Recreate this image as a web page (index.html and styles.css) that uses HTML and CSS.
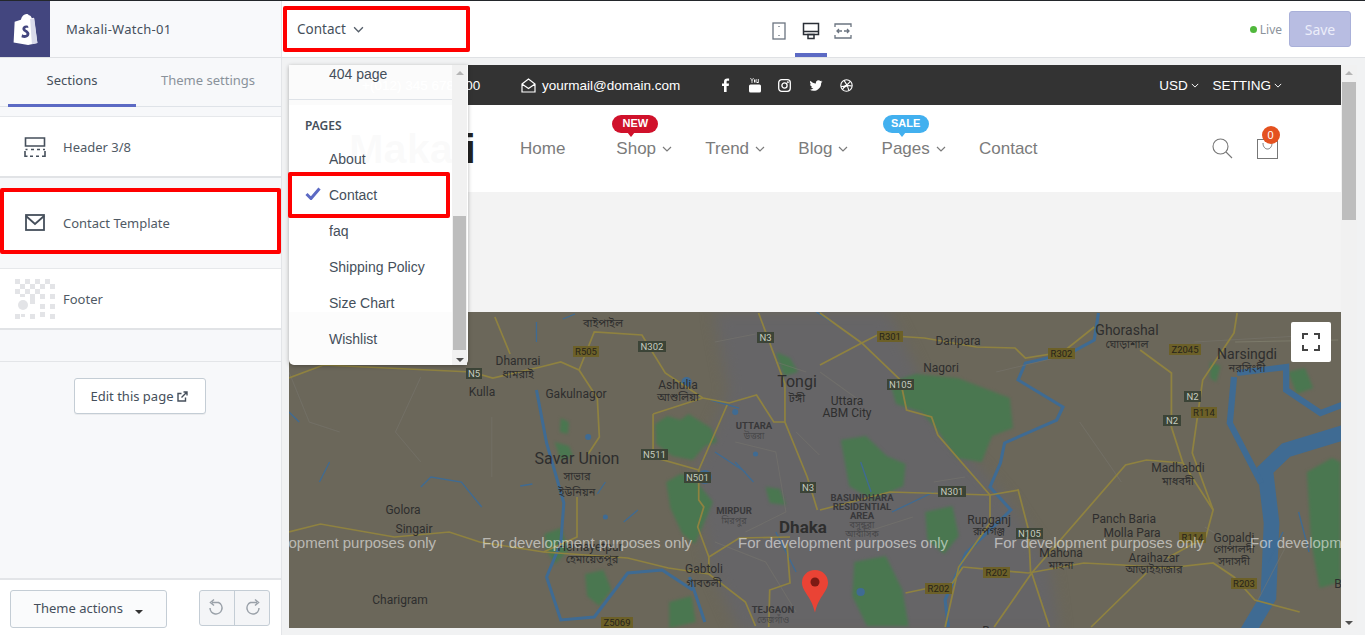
FILE: index.html
```html
<!DOCTYPE html>
<html lang="en">
<head>
    <meta charset="UTF-8">
    <meta name="viewport" content="width=device-width, initial-scale=1.0">
    <title>Makali-Watch-01 - Theme editor</title>
    <link rel="stylesheet" href="styles.css">
</head>
<body>

    <svg class="defs" width="0" height="0">
        <symbol id="chev" viewBox="0 0 10 6"><path d="M1 1l4 4 4-4" fill="none" stroke="currentColor" stroke-width="1.2"/></symbol>
    </svg>

    <!-- Top bar -->
    <header class="topbar">
        <div class="brand">
            <div class="brand-logo">
                <svg width="27" height="31" viewBox="2 1 23 30">
                    <path d="M3 8.500l6-2C10 3 12 1 14.500 1c1 0 1.800.4 2.300 1.200 1.600.1 2.400 1.500 2.800 3l2-.5L25 29l-9 2-14-2.500z" fill="#fff"/>
                    <path d="M18 5.800l1.700 24.400L25 29 22 5z" fill="#d9daea"/>
                    <path d="M16 12.500c-3-1-5.500.3-5.500 2.800 0 3 4 3.300 4 5 0 1.400-2.300 1.500-4.200.2l-.8 2.900c3.200 1.500 7.800.8 7.800-3.200 0-3.300-4-3.600-4-5 0-1 1.500-1.300 3-.6z" fill="#43467f"/>
                </svg>
            </div>
            <span class="brand-name">Makali-Watch-01</span>
        </div>
        <div class="page-select">
            <span>Contact</span>
            <svg class="page-chev"><use href="#chev"/></svg>
        </div>
        <div class="devices">
            <div class="device">
                <svg width="16" height="18" viewBox="0 0 16 18" fill="none" stroke="#6b7480" stroke-width="1.300"><rect x="2" y="1" width="12" height="16"/><path d="M8 4v1M8 13v1"/></svg>
            </div>
            <div class="device device-active">
                <svg width="18" height="18" viewBox="0 0 18 18" fill="none" stroke="#2a2f36" stroke-width="1.500"><rect x="1.500" y="1.500" width="15" height="11"/><path d="M1.500 9.500h15M6 16.500h6v-4H6z"/></svg>
            </div>
            <div class="device">
                <svg width="18" height="18" viewBox="0 0 18 18" fill="none" stroke="#6b7480" stroke-width="1.300"><path d="M1 5V2h16v3M1 13v3h16v-3M3 9h5M10 9h5M5 7L3 9l2 2M13 7l2 2-2 2"/></svg>
            </div>
        </div>
        <div class="live"><i class="live-dot"></i>Live</div>
        <button class="save-btn">Save</button>
    </header>

    <div class="workspace">

        <!-- Left sidebar -->
        <aside class="sidebar">
            <div class="tabs">
                <div class="tab tab-active">Sections</div>
                <div class="tab tab-wide">Theme settings</div>
            </div>

            <div class="card card-first">
                <svg class="card-icon" width="24" height="22" viewBox="0 0 24 22" fill="none" stroke="#454f5b" stroke-width="1.600"><path d="M2.500 2h19v8h-19z"/><path d="M2 15v5.200h2.500M7 20.200h3M13 20.200h3M19 20.200h3V15M2.500 13.500h2M8 13.500h3M14 13.500h3M20 13.500h2" /></svg>
                <span>Header 3/8</span>
            </div>
            <div class="card card-marked">
                <svg class="card-icon" width="24" height="22" viewBox="0 0 24 22" fill="none" stroke="#454f5b" stroke-width="1.800"><rect x="3" y="3" width="18" height="15"/><path d="M3 4l9 8 9-8"/></svg>
                <span>Contact Template</span>
            </div>
            <div class="card card-footer">
                <svg class="card-thumb" width="40" height="40" viewBox="0 0 40 40" fill="#e3e4e7">
                    <path d="M0 0h5v5H0zM10 0h5v5h-5zM20 0h5v5h-5zM30 0h5v5h-5zM5 5h5v5H5zM15 5h5v5h-5zM25 5h5v5h-5zM35 5h5v5h-5zM0 10h5v5H0zM10 10h5v5h-5zM20 10h5v5h-5zM35 15h5v5h-5zM25 15h5v5h-5zM15 15h5v5h-5zM5 15h5v3H5zM25 25h5v5h-5zM35 25h5v5h-5zM15 20h5v5h-5zM25 33h5v5h-5zM35 35h5v5h-5zM0 35h5v5H0zM15 35h5v5h-5z"/>
                    <circle cx="8" cy="26" r="5"/>
                    <path d="M6 35h4v3H6z"/>
                </svg>
                <span>Footer</span>
            </div>

            <div class="edit-row">
                <button class="edit-btn">
                    Edit this page
                    <svg width="11" height="11" viewBox="0 0 11 11" fill="none" stroke="#454f5b" stroke-width="1.400"><path d="M8.500 6.500v3.500H1V2.500h3.500M4.500 6.500L10 1M6.500 1H10v3.500"/></svg>
                </button>
            </div>

            <div class="side-foot">
                <button class="actions-btn">Theme actions <i class="caret"></i></button>
                <div class="history">
                    <div class="history-btn">
                        <svg width="20" height="20" viewBox="0 0 20 20" fill="none" stroke="#9aa1a9" stroke-width="1.500"><path d="M5 4.500h6.500a6 6 0 1 1-8.500 5.500M7 1.500L3.500 4.500 7 7.500"/></svg>
                    </div>
                    <div class="history-btn">
                        <svg width="20" height="20" viewBox="0 0 20 20" fill="none" stroke="#9aa1a9" stroke-width="1.500"><path d="M15 4.500H8.500a6 6 0 1 0 8.500 5.500M13 1.500l3.500 3-3.500 3"/></svg>
                    </div>
                </div>
            </div>
        </aside>

        <!-- Store preview -->
        <main class="preview">
            <div class="frame">
                <div class="store">
                    <div class="store-top">
                        <span class="phone">+(012) 345 6789 00</span>
                        <span class="mail">
                            <svg width="15" height="15" viewBox="0 0 15 15" fill="none" stroke="#fff" stroke-width="1.200"><path d="M1 6l6.500-5L14 6v8H1zM1 6l6.500 4.500L14 6"/></svg>
                            yourmail@domain.com
                        </span>
                        <div class="socials">
                            <svg width="10" height="14" viewBox="0 0 10 14" fill="#fff"><path d="M3 14V8H1V5.500h2V3.800C3 1.500 4.300.5 6.200.5c.9 0 1.600.1 1.900.1v2.200H6.800c-1 0-1.200.5-1.200 1.200v1.500h2.400L7.700 8H5.600v6z"/></svg>
                            <svg width="12" height="15" viewBox="0 0 12 15" fill="#fff"><path d="M2 0l1 2.500L4 0h.8L3.400 3v2h-.8V3L1.200 0zM5 1.500h1.500v3H5zM7.500 1h.7v3h.8V1h.7v4H7.500z"/><rect y="6.500" width="12" height="8" rx="1.500"/></svg>
                            <svg width="13" height="13" viewBox="0 0 13 13" fill="none" stroke="#fff" stroke-width="1.300"><rect x=".7" y=".7" width="11.600" height="11.600" rx="3"/><circle cx="6.500" cy="6.500" r="2.600"/><circle cx="9.800" cy="3.200" r=".4"/></svg>
                            <svg width="14" height="13" viewBox="0 0 24 24" fill="#fff"><path d="M23.950 4.570a10 10 0 0 1-2.820.77 4.960 4.960 0 0 0 2.160-2.720c-.95.55-2 .96-3.120 1.190a4.920 4.920 0 0 0-8.380 4.480C7.690 8.100 4.070 6.130 1.640 3.160a4.820 4.820 0 0 0-.67 2.480c0 1.710.87 3.210 2.190 4.100a4.900 4.900 0 0 1-2.230-.62v.06a4.920 4.920 0 0 0 3.950 4.830 5 5 0 0 1-2.210.08 4.940 4.940 0 0 0 4.600 3.420A9.870 9.870 0 0 1 0 19.540a14 14 0 0 0 7.560 2.210c9.050 0 14-7.500 14-13.980 0-.21 0-.42-.02-.63a9.940 9.940 0 0 0 2.460-2.550z"/></svg>
                            <svg width="13" height="13" viewBox="0 0 13 13" fill="none" stroke="#fff" stroke-width="1.100"><circle cx="6.500" cy="6.500" r="5.700"/><path d="M4 1.300c2 2.500 4 6 5 10.500M1 7.500c3.500 0 7-1.500 9-5M2.500 10.500c1.500-3 5-4.500 9.500-3.500"/></svg>
                        </div>
                        <div class="store-opts">
                            <span class="opt">USD <svg class="opt-chev"><use href="#chev"/></svg></span>
                            <span class="opt">SETTING <svg class="opt-chev"><use href="#chev"/></svg></span>
                        </div>
                    </div>

                    <nav class="store-nav">
                        <div class="store-logo">Makali</div>
                        <ul class="menu">
                            <li class="menu-home">Home</li>
                            <li>Shop <svg class="menu-chev"><use href="#chev"/></svg><b class="badge badge-new">NEW</b></li>
                            <li>Trend <svg class="menu-chev"><use href="#chev"/></svg></li>
                            <li>Blog <svg class="menu-chev"><use href="#chev"/></svg></li>
                            <li>Pages <svg class="menu-chev"><use href="#chev"/></svg><b class="badge badge-sale">SALE</b></li>
                            <li>Contact</li>
                        </ul>
                        <div class="store-tools">
                            <svg width="21" height="21" viewBox="0 0 21 21" fill="none" stroke="#777" stroke-width="1.100"><circle cx="8.500" cy="8.500" r="7.500"/><path d="M14 14l6 6"/></svg>
                            <div class="cart">
                                <svg width="21" height="21" viewBox="0 0 21 21" fill="none" stroke="#777" stroke-width="1"><rect x=".5" y="1.500" width="20" height="19"/><path d="M6 5c0 8 9 8 9 0"/></svg>
                                <b class="cart-count">0</b>
                            </div>
                        </div>
                    </nav>

                    <div class="store-band"></div>

                    <div class="map">
                        <svg class="map-svg" width="1052" height="316" viewBox="0 0 1052 316">
                            <rect width="1052" height="316" fill="#6b675a"/>
                            <path class="urban" d="M425 0H600L655 115 720 190 760 250 770 320H450L420 250 405 160 440 80z"/>

                            <!-- west half of the map -->
                            <g transform="translate(1 0) scale(1.0142 1) translate(-1 0)">
                                <g class="green">
                                    <path d="M361 112l12-8 13 4 8-6 22 14 6 14-12 4-12 14-20-4-16-12zM372 170l14-8 12 3 20 25-10 24-8 18-12-10-12-26zM252 222l16-6 8 22-14 14-8-14zM292 262l18-4 8 20-12 16-12-10zM268 106l8 4-1 12-8-2zM262 130l14 4 4 10-12 4zM375 290l22-6 4 26-26 6zM480 40l14 6 8 14-14 4zM470 175l14 2 6 16-16-2z"/>
                                </g>
                                <g class="river river-thin">
                                    <path d="M244 78l10 53 17 60-3 40-14 34 14 43 33-3 33-44 34-3 30 20M395 265l15 45"/>
                                </g>
                                <g class="river river-fine">
                                    <path d="M270 7l12-5M130 175l10-10 30 5 20 25M30 170l10-20M0 100l10 10M440 150l18 20M480 220l20 40M520 0l15 10M330 210l14-12M244 10l0 20M420 140l30 20M416 88l28 8M240 172l-12 2M312 170l-8 12"/>
                                    <circle cx="295" cy="125" r="3"/><circle cx="312" cy="205" r="2.500"/><circle cx="392" cy="70" r="5"/><circle cx="410" cy="165" r="7"/><circle cx="440" cy="100" r="3"/><circle cx="460" cy="142" r="2.500"/>
                                </g>
                                <g class="faint">
                                    <path d="M0 60l20 50 30 10M90 0v50M130 65l-25 55 25 30M200 105v60M420 30l40-8M440 130l40 10 10 60-40 20M480 50l30 10M500 120l23 23M420 230l50 20 30 50"/>
                                </g>
                                <g class="road">
                                    <path d="M0 220l31-8 73 13 54-5 30 10 63 10 83 6 40 10 40 6 36 28 10 24"/>
                                    <path d="M414 261v-16l30-19 50-1"/>
                                    <path d="M0 66l34-13 146 7 21 6 47-11 20-5 18 8 18 28 2 39-11 17"/>
                                    <path d="M286 58l15-38 47 3 23 38 37 25 26 5 27-8 17 27h11"/>
                                    <path d="M359 102v43l45 13 28-65M359 102l49-16"/>
                                    <path d="M404 158v30l5 7-6 20 11 30"/>
                                    <path d="M203 5l15 37M284 185v40l-33 15"/>
                                    <path d="M463 1l26 71v38l22 55 10 33"/>
                                    <path d="M473 315l1-37 20-7-3-39"/>
                                </g>
                            </g>

                            <!-- east half of the map -->
                            <g transform="translate(531 0) scale(1.0428 1) translate(-531 0)">
                                <g class="green">
                                    <path d="M598 70l25-8 40 4 50 20 3 30-20 8-10 26-24-4-20-30-14-16-24-8zM551 128l24-4 20 20 18 8-2 22-30 14-22-14zM564 250l30-6 16 34 6 36h-40l-14-30zM632 200l26-6 6 30-14 18-16-14zM998 160l24-14 8 4v120l-20 6-8-46zM980 60l16-4 8 20-16 6zM905 50l10 4-4 16-6-4z"/>
                                </g>
                                <g class="river river-wide">
                                    <path d="M941 320l20-35 3-74-6-53 20-20 70-22"/>
                                </g>
                                <g class="river river-mid">
                                    <path d="M928 65l-4 46 30 60M931 61l47-6v23l33 23 40-16"/>
                                </g>
                                <g class="river river-thin">
                                    <path d="M798 1l-4 27-23 13-43 10-7 17 43 27-6 13-50 23-4 20-10 24 20 23-43 43-20 47 3 27"/>
                                </g>
                                <g class="river river-fine">
                                    <path d="M570 150l10 30M600 200l40-20M961 250l14-30M990 200l10 40"/>
                                    <circle cx="570" cy="280" r="4"/>
                                </g>
                                <g class="faint">
                                    <path d="M531 60l40 30M560 225l60-20M640 170l30-5M700 60l60-15M780 110l40 60M890 30l100-6M900 215l30 20M950 290l30-60"/>
                                </g>
                                <g class="road">
                                    <path d="M531 1l40 30 37 37 6 30 24 7 6 18 50 60v28l-30 44-13 60"/>
                                    <path d="M531 53l40-22 15-8 45 3 50 9 37 1 10 10 36-6 30-25"/>
                                    <path d="M531 198l67-18 96 3 27-5 10 40 2 43"/>
                                    <path d="M838 38l30 23v54l11 36 29 47-7 27-37 21"/>
                                    <path d="M931 1l-3 20-30 47-10 73 20 57"/>
                                    <path d="M734 261l90-108 20-5 35 3"/>
                                    <path d="M668 255l63 6 53-10 37 2 43 3 44-5 20 14 20 23 43 12"/>
                                    <path d="M613 281l45-10 10-16M734 261l-36 54M734 261l17 54M844 261l-53 54"/>
                                </g>
                                <g class="road road-thin">
                                    <path d="M929 30l99-2"/>
                                </g>
                            </g>

                            <g class="shield shield-r"><rect x="284" y="34" width="26" height="11"/><text x="297" y="43">R505</text></g>
                            <g class="shield shield-n"><rect x="349" y="29" width="28" height="11"/><text x="363" y="38">N302</text></g>
                            <g class="shield shield-n"><rect x="177" y="56" width="16" height="11"/><text x="185" y="65">N5</text></g>
                            <g class="shield shield-n"><rect x="468" y="20" width="17" height="11"/><text x="476.500" y="29">N3</text></g>
                            <g class="shield shield-n"><rect x="352" y="137" width="27" height="11"/><text x="365.500" y="146">N511</text></g>
                            <g class="shield shield-n"><rect x="395" y="160" width="27" height="11"/><text x="408.500" y="169">N501</text></g>
                            <g class="shield shield-n"><rect x="511" y="170" width="16" height="11"/><text x="519" y="179">N3</text></g>
                            <g class="shield shield-r"><rect x="312" y="305" width="32" height="11"/><text x="328" y="314">Z5069</text></g>
                            <g class="shield shield-r"><rect x="588" y="19" width="26" height="11"/><text x="601" y="28">R301</text></g>
                            <g class="shield shield-r"><rect x="759" y="36" width="27" height="11"/><text x="772.500" y="45">R302</text></g>
                            <g class="shield shield-r"><rect x="880" y="32" width="32" height="11"/><text x="896" y="41">Z2045</text></g>
                            <g class="shield shield-n"><rect x="598" y="67" width="27" height="11"/><text x="611.500" y="76">N105</text></g>
                            <g class="shield shield-n"><rect x="895" y="79" width="17" height="11"/><text x="903.500" y="88">N2</text></g>
                            <g class="shield shield-r"><rect x="902" y="95" width="26" height="11"/><text x="915" y="104">R114</text></g>
                            <g class="shield shield-n"><rect x="874" y="103" width="18" height="11"/><text x="883" y="112">N2</text></g>
                            <g class="shield shield-n"><rect x="649" y="174" width="28" height="11"/><text x="663" y="183">N301</text></g>
                            <g class="shield shield-n"><rect x="727" y="216" width="27" height="11"/><text x="740.500" y="225">N105</text></g>
                            <g class="shield shield-r"><rect x="890" y="220" width="27" height="11"/><text x="903.500" y="229">R114</text></g>
                            <g class="shield shield-r"><rect x="694" y="255" width="27" height="11"/><text x="707.500" y="264">R202</text></g>
                            <g class="shield shield-r"><rect x="636" y="271" width="27" height="11"/><text x="649.500" y="280">R202</text></g>
                            <g class="shield shield-r"><rect x="942" y="266" width="26" height="11"/><text x="955" y="275">R203</text></g>

                            <g class="labels">
                                <text x="314" y="15" class="bn">বাইপাইল</text>
                                <text x="229" y="53">Dhamrai</text>
                                <text x="229" y="66" class="bn">ধামরাই</text>
                                <text x="193" y="84">Kulla</text>
                                <text x="287" y="86">Gakulnagor</text>
                                <text x="389" y="77">Ashulia</text>
                                <text x="389" y="89" class="bn">আশুলিয়া</text>
                                <text x="508" y="75" class="big">Tongi</text>
                                <text x="508" y="90" class="bn">টঙ্গী</text>
                                <text x="465" y="117" class="area">UTTARA</text>
                                <text x="465" y="127" class="bn area-bn">উত্তরা</text>
                                <text x="288" y="152" class="big">Savar Union</text>
                                <text x="288" y="168" class="bn">সাভার</text>
                                <text x="288" y="184" class="bn">ইউনিয়ন</text>
                                <text x="114" y="202">Golora</text>
                                <text x="125" y="221">Singair</text>
                                <text x="445" y="202" class="area">MIRPUR</text>
                                <text x="445" y="212" class="bn area-bn">মিরপুর</text>
                                <text x="514" y="221" class="city">Dhaka</text>
                                <text x="301" y="239">Hemayetpur</text>
                                <text x="303" y="251" class="bn">হেমায়েতপুর</text>
                                <text x="415" y="261">Gabtoli</text>
                                <text x="415" y="275" class="bn">গাবতলী</text>
                                <text x="111" y="292">Charigram</text>
                                <text x="484" y="301" class="area">TEJGAON</text>
                                <text x="484" y="311" class="bn area-bn">তেজগাঁও</text>
                                <text x="669" y="33">Daripara</text>
                                <text x="838" y="23" class="mid">Ghorashal</text>
                                <text x="838" y="36" class="bn">ঘোড়াশাল</text>
                                <text x="958" y="47" class="mid">Narsingdi</text>
                                <text x="958" y="60" class="bn">নরসিংদী</text>
                                <text x="652" y="60">Nagori</text>
                                <text x="558" y="93">Uttara</text>
                                <text x="558" y="105">ABM City</text>
                                <text x="889" y="160">Madhabdi</text>
                                <text x="889" y="173" class="bn">মাধবদী</text>
                                <text x="573" y="189" class="area">BASUNDHARA</text>
                                <text x="573" y="198" class="area">RESIDENTIAL</text>
                                <text x="573" y="207" class="area">AREA</text>
                                <text x="573" y="216" class="bn area-bn">বসুন্ধরা</text>
                                <text x="573" y="225" class="bn area-bn">আবাসিক</text>
                                <text x="700" y="212">Rupganj</text>
                                <text x="700" y="223" class="bn">রূপগঞ্জ</text>
                                <text x="835" y="211">Panch Baria</text>
                                <text x="843" y="225">Molla Para</text>
                                <text x="945" y="230">Gopaldi</text>
                                <text x="945" y="241" class="bn">গোপালদী</text>
                                <text x="945" y="253" class="bn">সদাসদী</text>
                                <text x="772" y="245">Mahona</text>
                                <text x="772" y="257" class="bn">মাহনা</text>
                                <text x="865" y="250">Araihazar</text>
                                <text x="865" y="261" class="bn">আড়াইহাজার</text>
                                <text x="709" y="323">Borna</text>
                                <text x="1049" y="276">B</text>
                            </g>

                            <g class="watermark">
                                <text x="-63" y="236">For development purposes only</text>
                                <text x="193" y="236">For development purposes only</text>
                                <text x="449" y="236">For development purposes only</text>
                                <text x="705" y="236">For development purposes only</text>
                                <text x="961" y="236">For development purposes only</text>
                            </g>

                            <path d="M526 258c-7.500 0-13 5.500-13 12.500 0 9 9.500 14 13 30 3.500-16 13-21 13-30 0-7-5.500-12.500-13-12.500z" fill="#ea4335"/>
                            <circle cx="526" cy="270" r="4.500" fill="#7c1a14"/>
                        </svg>
                        <button class="map-full">
                            <svg width="18" height="18" viewBox="0 0 18 18" fill="none" stroke="#444" stroke-width="2"><path d="M1 6V1h5M12 1h5v5M1 12v5h5M17 12v5h-5"/></svg>
                        </button>
                    </div>
                </div>
                <div class="page-scroll">
                    <i class="arrow arrow-up"></i>
                    <div class="page-thumb"></div>
                    <i class="arrow arrow-down"></i>
                </div>
            </div>

            <!-- Page picker, open over the preview -->
            <div class="picker">
                <div class="picker-list">
                    <div class="picker-item picker-first">404 page</div>
                    <div class="picker-group">PAGES</div>
                    <div class="picker-item">About</div>
                    <div class="picker-item picker-current">
                        <svg class="picker-check" width="16" height="13" viewBox="0 0 16 13"><path d="M1.500 7l4.500 4.500L14.500 1.500" fill="none" stroke="#5c6ac4" stroke-width="3"/></svg>
                        Contact
                    </div>
                    <div class="picker-item">faq</div>
                    <div class="picker-item">Shipping Policy</div>
                    <div class="picker-item">Size Chart</div>
                    <div class="picker-item">Wishlist</div>
                </div>
                <div class="picker-scroll">
                    <i class="arrow arrow-up"></i>
                    <div class="picker-thumb"></div>
                    <i class="arrow arrow-down"></i>
                </div>
            </div>
        </main>
    </div>

</body>
</html>
```

FILE: styles.css
```css
/* Basic reset */
* {
    margin: 0;
    padding: 0;
    box-sizing: border-box;
}

body {
    width: 1365px;
    height: 635px;
    overflow: hidden;
    display: flex;
    flex-direction: column;
    font-family: "Noto Sans", sans-serif;
    font-size: 13px;
    color: #454f5b;
    background-color: #f1f2f3;
    border-top: 1px solid #23272b;
}

button {
    font-family: inherit;
}

.defs {
    position: absolute;
}

/* Top bar */
.topbar {
    display: flex;
    align-items: center;
    height: 57px;
    flex-shrink: 0;
    background-color: #fff;
    border-bottom: 1px solid #dfe1e4;
}

.brand {
    display: flex;
    align-items: center;
    width: 282px;
    height: 100%;
    background-color: #f8f9fb;
    border-right: 1px solid #e3e5e8;
}

.brand-logo {
    display: flex;
    align-items: center;
    justify-content: center;
    width: 50px;
    height: 100%;
    background-color: #43467f;
}

.brand-name {
    margin-left: 16px;
    font-size: 13px;
    letter-spacing: 0.27px;
    color: #454f5b;
}

.page-select {
    display: flex;
    align-items: center;
    width: 187px;
    height: 46px;
    margin-left: 1px;
    padding-left: 10px;
    border: 4px solid #f00;
    border-radius: 2px;
    font-size: 13.500px;
    color: #454f5b;
}

.page-chev {
    width: 11px;
    height: 7px;
    margin-left: 7px;
    color: #555e69;
}

.devices {
    display: flex;
    height: 100%;
    margin-left: 293px;
}

.device {
    display: flex;
    align-items: center;
    justify-content: center;
    width: 32px;
    height: 100%;
    padding-top: 4px;
}

.device-active {
    border-bottom: 4px solid #5c6ac4;
    padding-top: 8px;
}

.live {
    display: flex;
    align-items: center;
    margin-left: auto;
    font-size: 12px;
    color: #8b939b;
}

.live-dot {
    width: 7px;
    height: 7px;
    margin-right: 3px;
    border-radius: 50%;
    background-color: #50b83c;
}

.save-btn {
    width: 62px;
    height: 36px;
    margin: 0 14px 0 7px;
    background-color: #b8bde2;
    border: 1px solid #a9b0d9;
    border-radius: 3px;
    color: #eceefa;
    font-size: 14px;
}

/* Main area */
.workspace {
    display: flex;
    flex: 1;
    min-height: 0;
}

.sidebar {
    display: flex;
    flex-direction: column;
    width: 282px;
    flex-shrink: 0;
    background-color: #f7f8fa;
    border-right: 1px solid #e3e5e8;
}

.tabs {
    display: flex;
    height: 49px;
    padding-left: 8px;
    border-bottom: 1px solid #dfe3e8;
}

.tab {
    width: 128px;
    padding-top: 13px;
    text-align: center;
    color: #8a929b;
}

.tab-wide {
    width: 144px;
}

.tab-active {
    color: #454f5b;
    border-bottom: 3px solid #5c6ac4;
    height: 49px;
}

.card {
    display: flex;
    align-items: center;
    height: 62px;
    background-color: #fff;
    border-top: 1px solid #e6e8eb;
    border-bottom: 2px solid #e1e3e6;
    color: #505a65;
}

.card span {
    font-size: 13px;
}

.card-first {
    margin-top: 9px;
}

.card-icon {
    margin: 0 16px 0 23px;
}

.card-marked {
    height: 66px;
    margin-top: 10px;
    padding-top: 3px;
    border: 4px solid #f00;
    border-radius: 2px;
}

.card-marked .card-icon {
    margin: 0 16px 0 19px;
}

.card-footer {
    margin-top: 14px;
}

.card-thumb {
    margin: 0 8px 0 15px;
}

.edit-row {
    display: flex;
    justify-content: center;
    margin-top: 31px;
    padding: 16px 2px 0 0;
    border-top: 1px solid #e3e5e8;
}

.edit-btn {
    display: flex;
    align-items: center;
    gap: 4px;
    justify-content: center;
    width: 132px;
    height: 36px;
    background-color: #fff;
    border: 1px solid #c4cdd5;
    border-radius: 3px;
    color: #454f5b;
    font-size: 13px;
    box-shadow: 0 1px 0 rgba(0, 0, 0, 0.05);
}

.side-foot {
    display: flex;
    justify-content: space-between;
    margin-top: auto;
    height: 57px;
    padding: 10px 11px 0 10px;
    border-top: 2px solid #e3e5e8;
    background-color: #fff;
}

.actions-btn {
    width: 157px;
    height: 38px;
    padding-bottom: 2px;
    background-color: #fafbfc;
    border: 1px solid #c4cdd5;
    border-radius: 3px;
    color: #454f5b;
    font-size: 13px;
}

.caret {
    display: inline-block;
    margin-left: 9px;
    vertical-align: -1px;
    border-top: 4px solid #333;
    border-left: 4px solid transparent;
    border-right: 4px solid transparent;
}

.history {
    display: flex;
    width: 71px;
    height: 36px;
    background-color: #f4f5f7;
    border: 1px solid #c4cdd5;
    border-radius: 3px;
}

.history-btn {
    display: flex;
    align-items: center;
    justify-content: center;
    flex: 1;
}

.history-btn + .history-btn {
    border-left: 1px solid #c4cdd5;
}

/* Preview */
.preview {
    position: relative;
    flex: 1;
    padding: 7px 8px 7px 7px;
    min-width: 0;
}

.frame {
    display: flex;
    height: 563px;
}

.store {
    width: 1052px;
    font-family: "Liberation Sans", Arial, sans-serif;
}

.store-top {
    display: flex;
    align-items: center;
    height: 40px;
    padding-left: 73px;
    background-color: #333;
    color: #fff;
    font-size: 13.500px;
}

.phone {
    width: 159px;
    white-space: nowrap;
}

.mail {
    display: flex;
    align-items: center;
    gap: 6px;
}

.socials {
    display: flex;
    align-items: center;
    gap: 17.500px;
    margin-left: 41px;
}

.store-opts {
    display: flex;
    gap: 14px;
    margin-left: 306px;
}

.opt-chev {
    width: 8px;
    height: 5px;
    margin-left: -1px;
    vertical-align: 2px;
    stroke-width: 2;
}

.store-nav {
    display: flex;
    align-items: center;
    height: 87px;
    padding-left: 60px;
    background-color: #fff;
}

.store-logo {
    width: 171px;
    font-size: 41.500px;
    font-weight: 700;
    white-space: nowrap;
    color: #222;
}

.menu {
    display: flex;
    gap: 33.500px;
    list-style: none;
    font-size: 17px;
    color: #7b7b7b;
}

.menu li {
    position: relative;
    white-space: nowrap;
}

.menu-home {
    margin-right: 17.500px;
}

.menu-chev {
    width: 10px;
    height: 6px;
    margin-left: 1px;
    vertical-align: 2px;
}

.badge {
    position: absolute;
    top: -24px;
    left: -4px;
    width: 46px;
    height: 18px;
    border-radius: 9px;
    color: #fff;
    font-size: 11px;
    line-height: 17px;
    text-align: center;
}

.badge::after {
    content: "";
    position: absolute;
    left: 15px;
    bottom: -4px;
    border-top: 5px solid;
    border-left: 4px solid transparent;
    border-right: 4px solid transparent;
}

.badge-new {
    background-color: #d0112b;
}

.badge-new::after {
    color: #d0112b;
}

.badge-sale {
    left: 1px;
    background-color: #42b0ef;
}

.badge-sale::after {
    color: #42b0ef;
}

.store-tools {
    display: flex;
    align-items: center;
    gap: 24px;
    margin-left: 174px;
}

.cart {
    position: relative;
    height: 21px;
}

.cart-count {
    position: absolute;
    top: -12px;
    right: -2px;
    width: 18px;
    height: 18px;
    border-radius: 50%;
    background-color: #e4511f;
    color: #fff;
    font-size: 11px;
    font-weight: normal;
    line-height: 18px;
    text-align: center;
}

.store-band {
    height: 120px;
    background-color: #f3f3f3;
}

/* Map */
.map {
    position: relative;
    height: 316px;
    overflow: hidden;
}

.map-svg {
    display: block;
}

.urban {
    fill: #666567;
    filter: blur(7px);
}

.green {
    fill: #4a7750;
    filter: blur(1.500px);
}

.river {
    fill: none;
    stroke: #3f6b93;
}

.river circle {
    fill: #3f6b93;
    stroke: none;
}

.river-wide {
    stroke-width: 15;
}

.river-mid {
    stroke-width: 6;
}

.river-thin {
    stroke-width: 3;
}

.river-fine {
    stroke-width: 1.300;
}

.faint {
    fill: none;
    stroke: #7a7770;
    stroke-width: 1;
    opacity: 0.5;
}

.road {
    fill: none;
    stroke: #8f8240;
    stroke-width: 1.700;
}

.road-thin {
    stroke: #7c7a6a;
    stroke-width: 1;
}

.shield text {
    font-family: Roboto, sans-serif;
    font-size: 9.500px;
    text-anchor: middle;
}

.shield-r rect {
    fill: #6c6028;
}

.shield-r text {
    fill: #27241a;
}

.shield-n rect {
    fill: #3c4437;
}

.shield-n text {
    fill: #c5cbbf;
}

.labels text {
    font-family: Roboto, sans-serif;
    font-size: 12px;
    text-anchor: middle;
    fill: #2e2e2e;
}

.labels .bn {
    font-family: "Noto Sans Bengali", "Noto Sans", sans-serif;
    font-size: 11px;
}

.labels .big {
    font-size: 16px;
}

.labels .mid {
    font-size: 14px;
}

.labels .city {
    font-size: 17px;
    font-weight: 700;
}

.labels .area {
    font-size: 9.500px;
    font-weight: 700;
    fill: #38383a;
}

.labels .area-bn {
    font-size: 9px;
    fill: #48484a;
}

.watermark text {
    font-family: "Liberation Sans", Arial, sans-serif;
    font-size: 15px;
    fill: rgba(255, 255, 255, 0.55);
}

.map-full {
    position: absolute;
    top: 10px;
    right: 10px;
    display: flex;
    align-items: center;
    justify-content: center;
    width: 40px;
    height: 40px;
    background-color: #fff;
    border: none;
    border-radius: 2px;
}

/* Scrollbars */
.page-scroll,
.picker-scroll {
    position: relative;
    width: 16px;
    background-color: #f1f1f1;
}

.page-thumb {
    position: absolute;
    top: 17px;
    left: 1px;
    width: 14px;
    height: 138px;
    background-color: #bdbdbd;
}

.arrow {
    position: absolute;
    left: 4px;
    border-left: 4px solid transparent;
    border-right: 4px solid transparent;
}

.arrow-up {
    top: 6px;
    border-bottom: 4px solid #b5b5b5;
}

.arrow-down {
    bottom: 3px;
    border-top: 4px solid #505050;
}

/* Page picker */
.picker {
    position: absolute;
    top: 7px;
    left: 7px;
    display: flex;
    width: 179px;
    height: 300px;
    background-color: rgba(255, 255, 255, 0.98);
    border-radius: 0 0 5px 5px;
    box-shadow: 0 1px 4px rgba(0, 0, 0, 0.3);
    font-family: "Liberation Sans", Arial, sans-serif;
    font-size: 14px;
    color: #454f5b;
}

.picker-list {
    flex: 1;
}

.picker-item {
    display: flex;
    align-items: center;
    height: 36px;
    padding-left: 40px;
}

.picker-first {
    height: 35px;
    padding-bottom: 17px;
    border-bottom: 1px solid #dfe3e8;
}

.picker-group {
    padding: 17px 0 0 16px;
    height: 41px;
    font-family: "Noto Sans", sans-serif;
    font-size: 12px;
    font-weight: 600;
}

.picker-current {
    position: relative;
    width: 162px;
    height: 46px;
    margin: -5px 0 -5px -1px;
    padding-left: 37px;
    border: 4px solid #f00;
    border-radius: 2px;
    background-color: #fff;
}

.picker-check {
    position: absolute;
    left: 13px;
    top: 11px;
}

.picker-scroll {
    width: 15px;
    margin-right: 1px;
}

.picker-thumb {
    position: absolute;
    top: 151px;
    left: 1px;
    width: 13px;
    height: 134px;
    background-color: #bdbdbd;
}
```
